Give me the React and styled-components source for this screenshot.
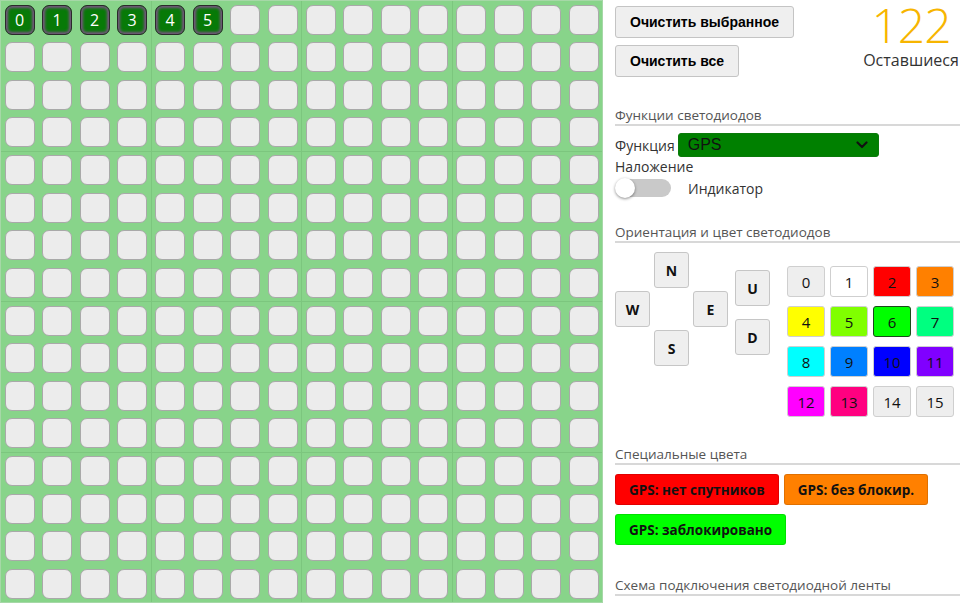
import styled, { createGlobalStyle } from "styled-components"

const GlobalStyle = createGlobalStyle`
body {
    margin: 0;
    background: #fff;
    font-family: 'Open Sans', 'Noto Sans', sans-serif;
    color: #333;
    overflow: hidden;
}
`

const Page = styled.div`
display: flex;
align-items: flex-start;
gap: 12px;
width: 960px;
`

const Board = styled.div`
display: grid;
grid-template-columns: repeat(4, 149.5px);
gap: 1px;
background: #7cc67e;
border: 1px solid #a6d8a7;
`

const Block = styled.div`
display: grid;
grid-template-columns: repeat(4, 30px);
grid-auto-rows: 30px;
gap: 7.5px;
padding: 3.5px;
background: #88d48a;
`

const Led = styled.div`
box-sizing: border-box;
border-radius: 7px;
display: flex;
align-items: center;
justify-content: center;
font-size: 16px;
color: #fff;
background: ${p => p.$on ? '#077a07' : '#ececec'};
border: 1px solid ${p => p.$on ? '#2a2a2a' : '#a9a9a9'};
box-shadow: ${p => p.$on ? 'inset 0 0 3px 2px #7a5484' : 'none'};
`

const Side = styled.div`
width: 345px;
display: flex;
flex-direction: column;
`

const TopRow = styled.div`
display: flex;
justify-content: space-between;
align-items: flex-start;
`

const ButtonStack = styled.div`
display: flex;
flex-direction: column;
align-items: flex-start;
gap: 7px;
padding-top: 6px;
`

const PlainButton = styled.button`
height: 32px;
padding: 0 14px;
font-family: 'Liberation Sans', Arial, sans-serif;
font-weight: bold;
font-size: 14px;
color: #000;
background: #efefef;
border: 1px solid #c4c4c4;
border-radius: 3px;
`

const Counter = styled.div`
display: flex;
flex-direction: column;
align-items: center;
width: 98px;
padding-top: 1px;
`

const CounterValue = styled.span`
font-size: 48px;
font-weight: 300;
letter-spacing: -1px;
line-height: 48px;
color: #f7b500;
`

const CounterLabel = styled.span`
font-size: 16px;
line-height: 20px;
color: #333;
margin-top: 1px;
`

const Heading = styled.div`
font-size: 13.5px;
line-height: 18px;
color: #555;
border-bottom: 2px solid #d8d8d8;
margin-top: ${p => p.$top}px;
`

const FieldRow = styled.div`
display: flex;
align-items: center;
gap: 3px;
margin-top: 7px;
font-size: 14px;
`

const SelectBox = styled.div`
width: 201px;
height: 24px;
box-sizing: border-box;
display: flex;
align-items: center;
justify-content: space-between;
padding: 0 10px 0 9px;
background: #008000;
border: 1px solid #0a7a0a;
border-radius: 3px;
font-family: 'Liberation Sans', Arial, sans-serif;
font-size: 16px;
color: #111;
`

const Label = styled.div`
font-size: 14px;
line-height: 20px;
color: #333;
`

const ToggleRow = styled.div`
display: flex;
align-items: center;
gap: 17px;
height: 20px;
margin-top: 1px;
font-size: 14px;
`

const Track = styled.span`
position: relative;
width: 54px;
height: 18px;
margin-left: 2px;
border-radius: 9px;
background: #c9c9c9;
`

const Knob = styled.span`
position: absolute;
left: -2px;
top: -1px;
width: 20px;
height: 20px;
border-radius: 50%;
background: #fff;
box-shadow: 0 1px 3px rgba(0, 0, 0, 0.45);
`

const OrientRow = styled.div`
display: flex;
align-items: flex-start;
margin-top: 9px;
`

const Pad = styled.div`
display: grid;
grid-template-columns: repeat(3, 35px);
grid-template-rows: repeat(3, 36px);
gap: 3px 4px;
`

const DirButton = styled.div`
grid-column: ${p => p.$col};
grid-row: ${p => p.$row};
box-sizing: border-box;
width: 35px;
height: 36px;
display: flex;
align-items: center;
justify-content: center;
font-size: 14px;
font-weight: bold;
color: #111;
background: #efefef;
border: 1px solid #c6c6c6;
border-radius: 3px;
`

const Vertical = styled.div`
display: flex;
flex-direction: column;
gap: 13px;
margin: 18px 0 0 7px;
`

const Swatches = styled.div`
display: grid;
grid-template-columns: repeat(4, 38px);
grid-auto-rows: 31px;
gap: 9px 5px;
margin: 14px 0 0 17px;
`

const Swatch = styled.div`
box-sizing: border-box;
display: flex;
align-items: center;
justify-content: center;
font-size: 15px;
color: #111;
background: ${p => p.$bg};
border: 1px solid ${p => p.$active ? '#1c4a1c' : '#cfcfcf'};
border-radius: 3px;
`

const SpecialList = styled.div`
display: flex;
flex-wrap: wrap;
gap: 9px 5px;
margin-top: 9px;
`

const SpecialButton = styled.div`
height: 31px;
box-sizing: border-box;
display: flex;
align-items: center;
padding: 0 13px;
font-size: 13.5px;
font-weight: bold;
color: #111;
background: ${p => p.$bg};
border: 1px solid rgba(0, 0, 0, 0.12);
border-radius: 3px;
`

const colors = [
    '#eeeeee', '#ffffff', '#ff0000', '#ff8000',
    '#ffff00', '#80ff00', '#00ff00', '#00ff80',
    '#00ffff', '#0080ff', '#0000ff', '#8000ff',
    '#ff00ff', '#ff0080', '#eeeeee', '#eeeeee',
]

// номер светодиода -> позиция в блоках 4x4
function ledsForBlock(b) {
    const bx = b % 4
    const by = Math.floor(b / 4)
    const out = []
    for (let r = 0; r < 4; r++) {
        for (let c = 0; c < 4; c++) {
            const row = by * 4 + r
            const col = bx * 4 + c
            out.push({ key: row * 16 + col, label: row === 0 && col < 6 ? col : null })
        }
    }
    return out
}

function Chevron() {
    return (
        <svg width="12" height="8" viewBox="0 0 12 8">
            <path d="M1.5 1.5 L6 6 L10.5 1.5" fill="none" stroke="#111" strokeWidth="2.2" strokeLinecap="round" strokeLinejoin="round" />
        </svg>
    )
}

function App() {
    return (
        <Page>
            <GlobalStyle />
            <Board>
                {Array.from({ length: 16 }, (_, b) => (
                    <Block key={b}>
                        {ledsForBlock(b).map(l => (
                            <Led key={l.key} $on={l.label !== null}>{l.label}</Led>
                        ))}
                    </Block>
                ))}
            </Board>
            <Side>
                <TopRow>
                    <ButtonStack>
                        <PlainButton>Очистить выбранное</PlainButton>
                        <PlainButton>Очистить все</PlainButton>
                    </ButtonStack>
                    <Counter>
                        <CounterValue>122</CounterValue>
                        <CounterLabel>Оставшиеся</CounterLabel>
                    </Counter>
                </TopRow>

                <Heading $top={29}>Функции светодиодов</Heading>
                <FieldRow>
                    <span>Функция</span>
                    <SelectBox>
                        <span>GPS</span>
                        <Chevron />
                    </SelectBox>
                </FieldRow>
                <Label>Наложение</Label>
                <ToggleRow>
                    <Track><Knob /></Track>
                    <span>Индикатор</span>
                </ToggleRow>

                <Heading $top={25}>Ориентация и цвет светодиодов</Heading>
                <OrientRow>
                    <Pad>
                        <DirButton $col={2} $row={1}>N</DirButton>
                        <DirButton $col={1} $row={2}>W</DirButton>
                        <DirButton $col={3} $row={2}>E</DirButton>
                        <DirButton $col={2} $row={3}>S</DirButton>
                    </Pad>
                    <Vertical>
                        <DirButton>U</DirButton>
                        <DirButton>D</DirButton>
                    </Vertical>
                    <Swatches>
                        {colors.map((c, i) => (
                            <Swatch key={i} $bg={c} $active={i === 6}>{i}</Swatch>
                        ))}
                    </Swatches>
                </OrientRow>

                <Heading $top={28}>Специальные цвета</Heading>
                <SpecialList>
                    <SpecialButton $bg="#ff0000">GPS: нет спутников</SpecialButton>
                    <SpecialButton $bg="#ff8000">GPS: без блокир.</SpecialButton>
                    <SpecialButton $bg="#00ff00">GPS: заблокировано</SpecialButton>
                </SpecialList>

                <Heading $top={31}>Схема подключения светодиодной ленты</Heading>
            </Side>
        </Page>
    )
}

export default App
